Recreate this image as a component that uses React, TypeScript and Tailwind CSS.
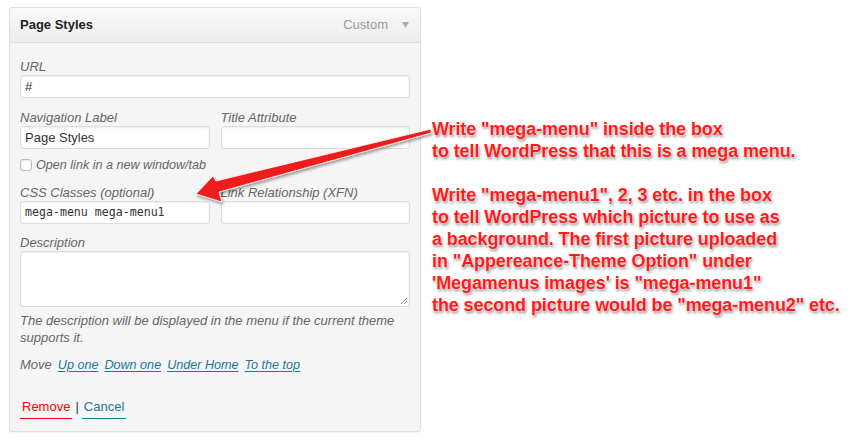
const sans = "font-['Liberation_Sans',Arial,sans-serif]";

function Field({ label, value, mono }: { label: string; value?: string; mono?: boolean }) {
  return (
    <div className="flex flex-col">
      <label className="h-4 text-[13px] leading-4 italic text-[#666]">{label}</label>
      <div
        className={`h-[23px] rounded-[3px] border border-[#dddddd] bg-white px-[4px] leading-[21px] text-[#333] shadow-[inset_0_1px_2px_rgba(0,0,0,0.07)] ${
          mono ? "font-['DejaVu_Sans_Mono',monospace] text-[11.6px]" : "text-[13px]"
        }`}
      >
        {value}
      </div>
    </div>
  );
}

function Note() {
  const lines = [
    'Write "mega-menu" inside the box',
    "to tell WordPress that this is a mega menu.",
    "",
    'Write "mega-menu1", 2, 3 etc. in the box',
    "to tell WordPress which picture to use as",
    "a background. The first picture uploaded",
    'in "Appereance-Theme Option" under',
    "'Megamenus images' is \"mega-menu1\"",
    'the second picture would be "mega-menu2" etc.',
  ];
  return (
    <div className="mt-[118px] ml-[11px] text-[18px] leading-[22px] font-bold tracking-[-0.1px] text-[#ff1a1a] [text-shadow:0_0_1px_#fff,0_0_2px_#fff,1px_2px_3px_rgba(0,0,0,0.5)]">
      {lines.map((l, i) => (
        <div key={i} className="h-[22px] whitespace-nowrap">
          {l}
        </div>
      ))}
    </div>
  );
}

export default function App() {
  return (
    <div className={`relative h-[440px] w-[864px] overflow-hidden bg-white ${sans}`}>
      <div className="flex">
        <div className="mt-[7px] ml-[9px] w-[412px] rounded-[3px] border border-[#dfdfdf] bg-[#f5f5f5] shadow-[0_1px_1px_rgba(0,0,0,0.04)]">
          <div className="flex h-[35px] items-center justify-between rounded-t-[3px] border-b border-[#dfdfdf] bg-gradient-to-b from-[#fafafa] to-[#ececec] pr-[11px] pl-[10px]">
            <span className="text-[13px] font-bold text-[#222]">Page Styles</span>
            <span className="flex items-center gap-[14px] text-[13px] text-[#999]">
              Custom
              <svg width="7" height="6" viewBox="0 0 7 6">
                <path d="M0 0h7L3.5 6z" fill="#aaa" />
              </svg>
            </span>
          </div>
          <div className="px-[10px] pt-[16px] pb-[12px]">
            <Field label="URL" value="#" />
            <div className="mt-[12px] grid grid-cols-2 gap-[11px]">
              <Field label="Navigation Label" value="Page Styles" />
              <Field label="Title Attribute" />
            </div>
            <div className="mt-[8px] flex h-4 items-center gap-[4px] text-[12.6px] italic text-[#666]">
              <span className="h-[12px] w-[12px] rounded-[3px] border border-[#bbb] bg-white shadow-[inset_0_1px_2px_rgba(0,0,0,0.1)]" />
              Open link in a new window/tab
            </div>
            <div className="mt-[12px] grid grid-cols-2 gap-[11px]">
              <Field label="CSS Classes (optional)" value="mega-menu mega-menu1" mono />
              <Field label="Link Relationship (XFN)" />
            </div>
            <div className="mt-[11px] flex flex-col">
              <label className="h-4 text-[13px] leading-4 italic text-[#666]">Description</label>
              <div className="relative h-[56px] rounded-[3px] border border-[#dddddd] bg-white shadow-[inset_0_1px_2px_rgba(0,0,0,0.07)]">
                <svg className="absolute right-[2px] bottom-[2px]" width="7" height="7" viewBox="0 0 7 7">
                  <path d="M1 7L7 1M4 7L7 4" stroke="#888" strokeWidth="1" />
                </svg>
              </div>
            </div>
            <p className="mt-[5px] text-[13px] leading-[17px] italic text-[#666]">
              The description will be displayed in the menu if the current theme supports it.
            </p>
            <div className="mt-[11px] flex h-4 items-center gap-[6px] text-[13px] italic text-[#666]">
              <span>Move</span>
              {["Up one", "Down one", "Under Home", "To the top"].map((t) => (
                <span key={t} className="text-[12.6px] text-[#21759b] underline underline-offset-2">
                  {t}
                </span>
              ))}
            </div>
            <div className="mt-[24px] flex items-start gap-[3px] text-[13px]">
              <span className="border-b border-red-600 px-[2px] pb-[1px] text-[#ff0000]">Remove</span>
              <span className="text-[#333]">|</span>
              <span className="border-b border-[#21759b] px-[2px] pb-[1px] text-[#21759b]">Cancel</span>
            </div>
          </div>
        </div>
        <Note />
      </div>
      <svg className="pointer-events-none absolute top-0 left-0" width="864" height="440">
        <defs>
          <filter id="sh" x="-10%" y="-10%" width="130%" height="130%">
            <feDropShadow dx="1" dy="2" stdDeviation="1.5" floodColor="#000" floodOpacity="0.4" />
          </filter>
        </defs>
        <polygon
          points="431,129 216,181 213,176 196,194 222,202 219,192 431,133"
          fill="#f01c1c"
          stroke="#fff"
          strokeWidth="0.8"
          filter="url(#sh)"
        />
      </svg>
    </div>
  );
}
